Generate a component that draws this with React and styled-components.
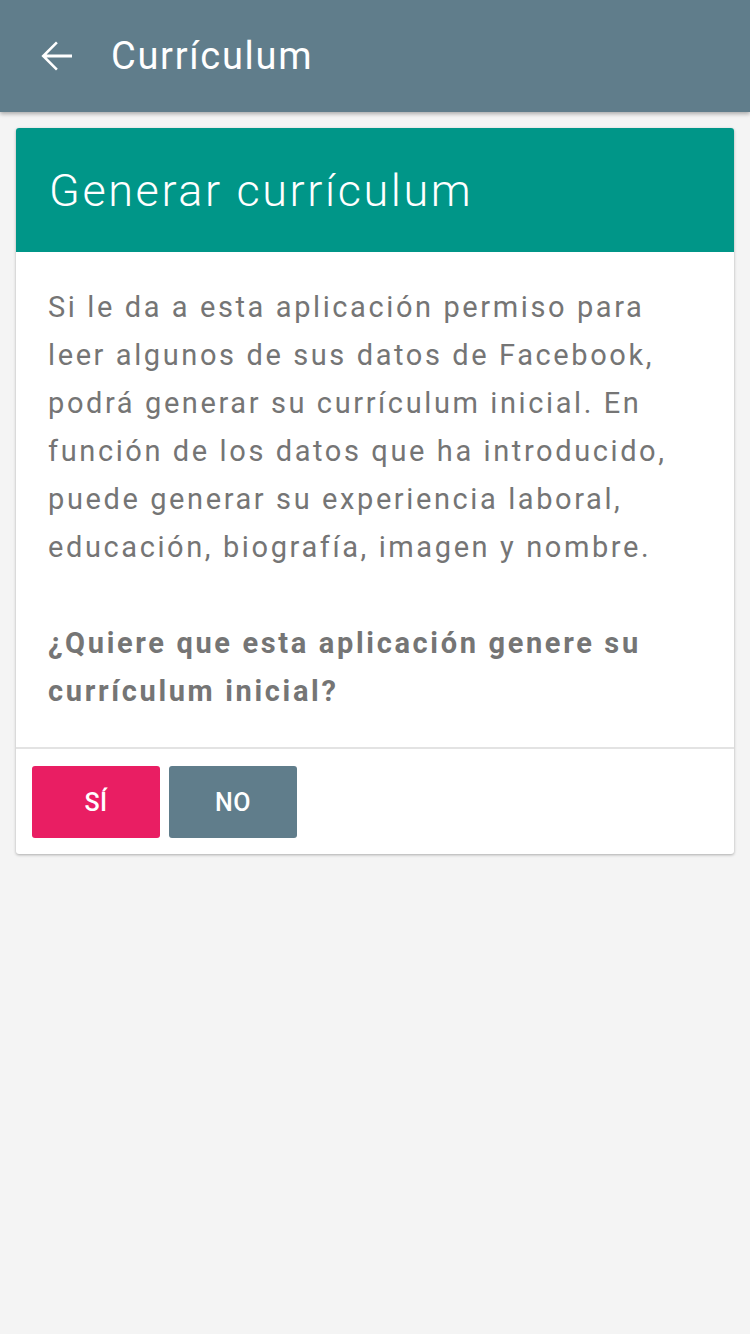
import React from 'react'
import styled, { createGlobalStyle } from 'styled-components'

const GlobalStyle = createGlobalStyle`
  html, body {
    margin: 0;
    padding: 0;
    background: #f4f4f4;
    font-family: Roboto, "Noto Sans", sans-serif;
  }
`

const Page = styled.div`
  min-height: 1334px;
  background: #f4f4f4;
`

const TopBar = styled.header`
  height: 112px;
  background: #607d8b;
  display: flex;
  align-items: center;
  padding: 0 32px;
  box-sizing: border-box;
  box-shadow: 0 2px 4px rgba(0, 0, 0, 0.3);
  position: relative;
  z-index: 1;
`

const BackButton = styled.button`
  border: 0;
  background: none;
  padding: 0;
  margin-right: 31px;
  display: flex;
  align-items: center;
  cursor: pointer;
`

const BarTitle = styled.h1`
  margin: 0;
  color: #fff;
  font-size: 38px;
  font-weight: 400;
  letter-spacing: 1.7px;
`

const Content = styled.main`
  padding: 16px;
`

const Card = styled.section`
  background: #fff;
  border-radius: 3px;
  overflow: hidden;
  box-shadow: 0 1px 3px rgba(0, 0, 0, 0.3);
`

const CardHeader = styled.div`
  background: #009688;
  height: 124px;
  display: flex;
  align-items: center;
  padding: 0 33px;
`

const CardTitle = styled.h2`
  margin: 0;
  color: #fff;
  font-size: 45px;
  font-weight: 300;
  letter-spacing: 2.6px;
`

const CardBody = styled.div`
  padding: 31px 32px 32px;
  border-bottom: 2px solid #e3e3e3;
`

const Text = styled.p`
  margin: 0;
  color: #757575;
  font-size: 29px;
  line-height: 48px;
  letter-spacing: ${p => (p.$strong ? '2.65px' : '2.6px')};
  font-weight: ${p => (p.$strong ? 700 : 400)};
  & + & {
    margin-top: 48px;
  }
`

const Actions = styled.div`
  display: flex;
  gap: 9px;
  padding: 17px 16px 16px;
`

const Button = styled.button`
  width: 128px;
  height: 72px;
  border: 0;
  border-radius: 3px;
  background: ${p => p.$color};
  color: #fff;
  font-family: Roboto, sans-serif;
  font-size: 25px;
  font-weight: 500;
  letter-spacing: 0.5px;
  cursor: pointer;
`

export default function App() {
  return (
    <Page>
      <GlobalStyle />
      <TopBar>
        <BackButton aria-label="Volver">
          <svg width="48" height="48" viewBox="0 0 24 24">
            <path fill="#fff" d="M20 11.2H7.3l5.6-5.6L12 4.7l-7.3 7.3 7.3 7.3.9-.9-5.6-5.6H20z" />
          </svg>
        </BackButton>
        <BarTitle>Currículum</BarTitle>
      </TopBar>
      <Content>
        <Card>
          <CardHeader>
            <CardTitle>Generar currículum</CardTitle>
          </CardHeader>
          <CardBody>
            <Text>
              Si le da a esta aplicación permiso para leer algunos de sus datos de Facebook,
              podrá generar su currículum inicial. En función de los datos que ha introducido,
              puede generar su experiencia laboral, educación, biografía, imagen y nombre.
            </Text>
            <Text $strong>¿Quiere que esta aplicación genere su currículum inicial?</Text>
          </CardBody>
          <Actions>
            <Button $color="#e91e63">SÍ</Button>
            <Button $color="#607d8b">NO</Button>
          </Actions>
        </Card>
      </Content>
    </Page>
  )
}
